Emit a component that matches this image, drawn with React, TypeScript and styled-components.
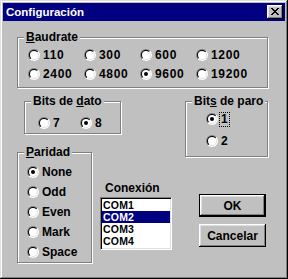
import React from 'react';
import styled, { createGlobalStyle } from 'styled-components';

const Global = createGlobalStyle`
  html, body { margin: 0; padding: 0; background: #c0c0c0; }
  body { font-family: "Liberation Sans", Arial, sans-serif; }
  * { box-sizing: border-box; }
`;

const Window = styled.div`
  width: 288px;
  height: 279px;
  padding: 3px;
  background: #c0c0c0;
  box-shadow: inset -1px -1px #000, inset 1px 1px #dfdfdf, inset -2px -2px #808080, inset 2px 2px #fff;
  display: flex;
  flex-direction: column;
  font: bold 12px/14px "Liberation Sans", Arial, sans-serif;
  color: #000;
`;

const TitleBar = styled.div`
  height: 18px;
  background: #000080;
  display: flex;
  align-items: center;
  justify-content: space-between;
  padding: 0 2px 0 3px;
`;

const TitleText = styled.span`
  color: #fff;
  font-size: 11.5px;
`;

const CloseButton = styled.div`
  width: 16px;
  height: 14px;
  background: #c0c0c0;
  box-shadow: inset -1px -1px #000, inset 1px 1px #fff, inset -2px -2px #808080, inset 2px 2px #dfdfdf;
  display: flex;
  align-items: center;
  justify-content: center;
  padding: 0 0 1px 0;
`;

const Body = styled.div`
  padding: 16px 0 0 14px;
  display: flex;
  flex-direction: column;
`;

const Group = styled.div<{ $w: number; $h: number; $pad: string; $mt?: number; $ml?: number }>`
  position: relative;
  width: ${(p) => p.$w}px;
  height: ${(p) => p.$h}px;
  margin-top: ${(p) => p.$mt ?? 0}px;
  margin-left: ${(p) => p.$ml ?? 0}px;
  padding: ${(p) => p.$pad};
  border: 1px solid #808080;
  box-shadow: inset 1px 1px #fff, 1px 1px #fff;
`;

const Legend = styled.span`
  position: absolute;
  top: -8px;
  left: 6px;
  padding: 0 2px;
  background: #c0c0c0;
  line-height: 14px;
  white-space: nowrap;
`;

const RadioGrid = styled.div<{ $cols: number; $colW: number; $rowGap: number }>`
  display: grid;
  grid-template-columns: repeat(${(p) => p.$cols}, ${(p) => p.$colW}px);
  row-gap: ${(p) => p.$rowGap}px;
`;

const RadioItem = styled.div`
  display: flex;
  align-items: center;
  height: 12px;
  gap: 2px;
  white-space: nowrap;
`;

const RadioLabel = styled.span<{ $focus?: boolean; $num?: boolean }>`
  padding: 0 1px;
  line-height: 13px;
  letter-spacing: ${(p) => (p.$num ? '0.7px' : '0')};
  outline: ${(p) => (p.$focus ? '1px dotted #000' : 'none')};
`;

const Lower = styled.div`
  display: flex;
`;

const LeftCol = styled.div`
  width: 155px;
  display: flex;
  flex-direction: column;
`;

const RightCol = styled.div`
  margin-left: 13px;
  display: flex;
  flex-direction: column;
`;

const LowerRow = styled.div`
  display: flex;
  margin-top: 18px;
`;

const ConnCol = styled.div`
  margin: 29px 0 0 8px;
  display: flex;
  flex-direction: column;
`;

const ConnLabel = styled.span`
  padding-left: 5px;
  line-height: 14px;
`;

const ListBox = styled.div`
  margin-top: 2px;
  width: 72px;
  height: 53px;
  background: #fff;
  border: 1px solid;
  border-color: #808080 #fff #fff #808080;
  box-shadow: inset 1px 1px #000, inset -1px -1px #dfdfdf;
  padding: 1px;
  display: flex;
  flex-direction: column;
`;

const ListItem = styled.div<{ $sel?: boolean }>`
  height: 12px;
  line-height: 12px;
  font-size: 10.5px;
  letter-spacing: 0.2px;
  padding-left: 1px;
  background: ${(p) => (p.$sel ? '#000080' : 'transparent')};
  color: ${(p) => (p.$sel ? '#fff' : '#000')};
`;

const Button = styled.div<{ $default?: boolean; $mt: number }>`
  width: 67px;
  height: 23px;
  margin: ${(p) => p.$mt}px 0 0 14px;
  display: flex;
  align-items: center;
  justify-content: center;
  background: #c0c0c0;
  border: ${(p) => (p.$default ? '1px solid #000' : 'none')};
  box-shadow: inset -1px -1px #000, inset 1px 1px #fff, inset -2px -2px #808080, inset 2px 2px #dfdfdf;
`;

const RadioSvg = styled.svg`
  flex: none;
  display: block;
`;

const Radio: React.FC<{ checked?: boolean }> = ({ checked }) => (
  <RadioSvg width="12" height="12" viewBox="0 0 12 12">
    <defs>
      <linearGradient id="rOuter" x1="0" y1="0" x2="1" y2="1">
        <stop offset="0.5" stopColor="#808080" />
        <stop offset="0.5" stopColor="#ffffff" />
      </linearGradient>
      <linearGradient id="rInner" x1="0" y1="0" x2="1" y2="1">
        <stop offset="0.5" stopColor="#000000" />
        <stop offset="0.5" stopColor="#dfdfdf" />
      </linearGradient>
    </defs>
    <circle cx="6" cy="6" r="6" fill="url(#rOuter)" />
    <circle cx="6" cy="6" r="5" fill="url(#rInner)" />
    <circle cx="6" cy="6" r="4" fill="#fff" />
    {checked && <circle cx="6" cy="6" r="2" fill="#000" />}
  </RadioSvg>
);

const CloseGlyph = () => {
  const rows: [number, number][][] = [
    [[0, 2], [6, 2]],
    [[1, 2], [5, 2]],
    [[2, 4]],
    [[3, 2]],
    [[2, 4]],
    [[1, 2], [5, 2]],
    [[0, 2], [6, 2]],
  ];
  return (
    <svg width="8" height="7" viewBox="0 0 8 7" shapeRendering="crispEdges">
      {rows.flatMap((segs, y) =>
        segs.map(([x, w], i) => <rect key={`${y}-${i}`} x={x} y={y} width={w} height={1} fill="#000" />)
      )}
    </svg>
  );
};

const bauds = ['110', '300', '600', '1200', '2400', '4800', '9600', '19200'];
const parities = ['None', 'Odd', 'Even', 'Mark', 'Space'];
const ports = ['COM1', 'COM2', 'COM3', 'COM4'];

export default function App() {
  return (
    <>
      <Global />
      <Window>
        <TitleBar>
          <TitleText>Configuración</TitleText>
          <CloseButton>
            <CloseGlyph />
          </CloseButton>
        </TitleBar>
        <Body>
          <Group $w={251} $h={51} $pad="11px 0 0 10px">
            <Legend>
              <u>B</u>audrate
            </Legend>
            <RadioGrid $cols={4} $colW={56} $rowGap={7}>
              {bauds.map((b) => (
                <RadioItem key={b}>
                  <Radio checked={b === '9600'} />
                  <RadioLabel $num>{b}</RadioLabel>
                </RadioItem>
              ))}
            </RadioGrid>
          </Group>
          <Lower>
            <LeftCol>
              <Group $w={97} $h={33} $pad="15px 0 0 13px" $mt={13} $ml={7}>
                <Legend>
                  Bits de <u>d</u>ato
                </Legend>
                <RadioGrid $cols={2} $colW={42} $rowGap={0}>
                  <RadioItem>
                    <Radio />
                    <RadioLabel $num>7</RadioLabel>
                  </RadioItem>
                  <RadioItem>
                    <Radio checked />
                    <RadioLabel $num>8</RadioLabel>
                  </RadioItem>
                </RadioGrid>
              </Group>
              <LowerRow>
                <Group $w={76} $h={111} $pad="13px 0 0 9px">
                  <Legend>
                    <u>P</u>aridad
                  </Legend>
                  <RadioGrid $cols={1} $colW={60} $rowGap={8}>
                    {parities.map((p) => (
                      <RadioItem key={p}>
                        <Radio checked={p === 'None'} />
                        <RadioLabel>{p}</RadioLabel>
                      </RadioItem>
                    ))}
                  </RadioGrid>
                </Group>
                <ConnCol>
                  <ConnLabel>Conexión</ConnLabel>
                  <ListBox>
                    {ports.map((p) => (
                      <ListItem key={p} $sel={p === 'COM2'}>
                        {p}
                      </ListItem>
                    ))}
                  </ListBox>
                </ConnCol>
              </LowerRow>
            </LeftCol>
            <RightCol>
              <Group $w={83} $h={56} $pad="11px 0 0 20px" $mt={13}>
                <Legend>
                  Bit<u>s</u> de paro
                </Legend>
                <RadioGrid $cols={1} $colW={50} $rowGap={10}>
                  <RadioItem>
                    <Radio checked />
                    <RadioLabel $num $focus>
                      1
                    </RadioLabel>
                  </RadioItem>
                  <RadioItem>
                    <Radio />
                    <RadioLabel $num>2</RadioLabel>
                  </RadioItem>
                </RadioGrid>
              </Group>
              <Button $default $mt={37}>
                OK
              </Button>
              <Button $mt={7}>Cancelar</Button>
            </RightCol>
          </Lower>
        </Body>
      </Window>
    </>
  );
}
